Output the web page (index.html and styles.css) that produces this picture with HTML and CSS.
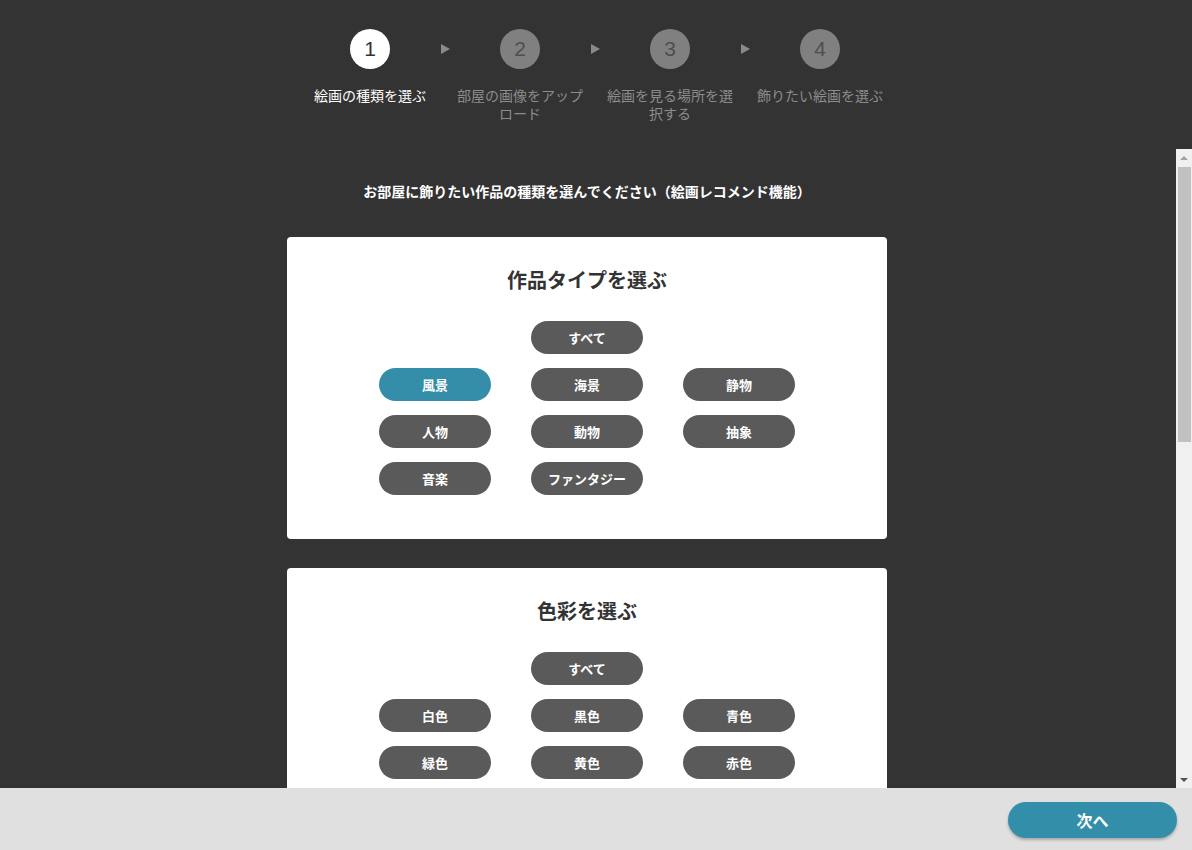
FILE: index.html
```html
<!DOCTYPE html>
<html lang="ja">
<head>
    <meta charset="UTF-8">
    <meta name="viewport" content="width=device-width, initial-scale=1.0">
    <title>絵画レコメンド</title>
    <link rel="stylesheet" href="styles.css">
</head>
<body>
    <div class="page">
        <header class="stepper">
            <div class="step active">
                <div class="step-num">1</div>
                <div class="step-label">絵画の種類を選ぶ</div>
            </div>
            <div class="step-arrow"></div>
            <div class="step">
                <div class="step-num">2</div>
                <div class="step-label">部屋の画像をアップロード</div>
            </div>
            <div class="step-arrow"></div>
            <div class="step">
                <div class="step-num">3</div>
                <div class="step-label">絵画を見る場所を選択する</div>
            </div>
            <div class="step-arrow"></div>
            <div class="step">
                <div class="step-num">4</div>
                <div class="step-label">飾りたい絵画を選ぶ</div>
            </div>
        </header>

        <div class="scroll-area">
            <main class="content">
                <p class="lead">お部屋に飾りたい作品の種類を選んでください（絵画レコメンド機能）</p>

                <section class="card">
                    <h2>作品タイプを選ぶ</h2>
                    <div class="all-row">
                        <button class="chip">すべて</button>
                    </div>
                    <div class="chip-grid">
                        <button class="chip selected">風景</button>
                        <button class="chip">海景</button>
                        <button class="chip">静物</button>
                        <button class="chip">人物</button>
                        <button class="chip">動物</button>
                        <button class="chip">抽象</button>
                        <button class="chip">音楽</button>
                        <button class="chip">ファンタジー</button>
                    </div>
                </section>

                <section class="card">
                    <h2>色彩を選ぶ</h2>
                    <div class="all-row">
                        <button class="chip">すべて</button>
                    </div>
                    <div class="chip-grid">
                        <button class="chip">白色</button>
                        <button class="chip">黒色</button>
                        <button class="chip">青色</button>
                        <button class="chip">緑色</button>
                        <button class="chip">黄色</button>
                        <button class="chip">赤色</button>
                    </div>
                </section>
            </main>

            <!-- ページのスクロールバー（先頭位置） -->
            <div class="scrollbar">
                <div class="sb-btn sb-up"></div>
                <div class="sb-track">
                    <div class="sb-thumb"></div>
                </div>
                <div class="sb-btn sb-down"></div>
            </div>
        </div>

        <footer class="footer">
            <button class="next-btn">次へ</button>
        </footer>
    </div>
</body>
</html>
```

FILE: styles.css
```css
* {
    box-sizing: border-box;
}

html, body {
    margin: 0;
    height: 100%;
}

body {
    font-family: "Noto Sans CJK JP", "Liberation Sans", sans-serif;
    background-color: #333333;
    color: #ffffff;
}

.page {
    display: flex;
    flex-direction: column;
    height: 100vh;
}

/* ステップ表示 */
.stepper {
    flex: 0 0 149px;
    display: flex;
    justify-content: center;
    align-items: flex-start;
    padding-top: 29px;
    padding-right: 2px;
}

.step {
    width: 130px;
    display: flex;
    flex-direction: column;
    align-items: center;
}

.step-num {
    width: 40px;
    height: 40px;
    border-radius: 50%;
    background-color: #808080;
    color: #4e4e4e;
    font-family: "Liberation Sans", Arial, sans-serif;
    font-size: 21px;
    line-height: 40px;
    text-align: center;
}

.step-label {
    margin-top: 17px;
    font-size: 14px;
    line-height: 18px;
    color: #8c8c8c;
    text-align: center;
    word-break: break-all;
}

.step.active .step-num {
    background-color: #ffffff;
    color: #333333;
}

.step.active .step-label {
    color: #ffffff;
}

.step-arrow {
    width: 20px;
    height: 40px;
    display: flex;
    justify-content: center;
    align-items: center;
}

.step-arrow::before {
    content: "";
    border-left: 9px solid #8a8a8a;
    border-top: 5px solid transparent;
    border-bottom: 5px solid transparent;
}

/* スクロール領域 */
.scroll-area {
    flex: 1;
    display: flex;
    min-height: 0;
}

.content {
    flex: 1;
    overflow: hidden;
    padding: 32px 2px 60px 0;
}

.scrollbar {
    flex: 0 0 16px;
    display: flex;
    flex-direction: column;
    background-color: #f0f0f0;
}

.sb-btn {
    height: 17px;
    display: flex;
    justify-content: center;
    align-items: center;
}

.sb-up::before {
    content: "";
    border-bottom: 4px solid #a3a3a3;
    border-left: 4px solid transparent;
    border-right: 4px solid transparent;
}

.sb-down::before {
    content: "";
    border-top: 4px solid #505050;
    border-left: 4px solid transparent;
    border-right: 4px solid transparent;
}

.sb-track {
    flex: 1;
    padding: 1px 1px 0 2px;
}

.sb-thumb {
    height: 275px;
    background-color: #c1c1c1;
}

.lead {
    margin: 0 0 36px;
    font-size: 14px;
    font-weight: bold;
    line-height: 20px;
    text-align: center;
}

.card {
    width: 600px;
    margin: 0 auto 29px;
    background-color: #ffffff;
    border-radius: 4px;
    padding: 28px 0 44px;
    color: #333333;
}

.card h2 {
    margin: 0 0 26px;
    font-size: 20px;
    line-height: 30px;
    font-weight: bold;
    text-align: center;
}

.all-row {
    display: flex;
    justify-content: center;
    margin-bottom: 14px;
}

.chip-grid {
    display: grid;
    grid-template-columns: repeat(3, 112px);
    column-gap: 40px;
    row-gap: 14px;
    justify-content: center;
}

.chip {
    width: 112px;
    height: 33px;
    border: none;
    border-radius: 17px;
    background-color: #5a5a5a;
    color: #ffffff;
    font-family: inherit;
    font-size: 13px;
    font-weight: bold;
    cursor: pointer;
    padding: 0;
}

.chip.selected {
    background-color: #358ea9;
}

/* 下部のボタンバー */
.footer {
    flex: 0 0 62px;
    background-color: #e0e0e0;
    display: flex;
    justify-content: flex-end;
    align-items: flex-start;
    padding: 14px 15px 0 0;
}

.next-btn {
    width: 169px;
    height: 36px;
    border: none;
    border-radius: 18px;
    background-color: #338fa9;
    color: #ffffff;
    font-family: inherit;
    font-size: 16px;
    font-weight: bold;
    box-shadow: 0 2px 3px rgba(0, 0, 0, 0.25);
    cursor: pointer;
}
```
